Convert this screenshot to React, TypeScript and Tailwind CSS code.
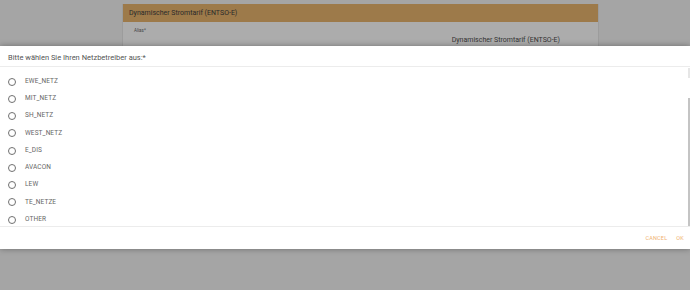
import React from 'react';

const options = ['EWE_NETZ', 'MIT_NETZ', 'SH_NETZ', 'WEST_NETZ', 'E_DIS', 'AVACON', 'LEW', 'TE_NETZE', 'OTHER'];

const Radio: React.FC<{ label: string }> = ({ label }) => (
  <div className="flex items-center h-[17.25px] pl-[8px]">
    <span className="w-[8px] h-[8px] rounded-full border border-[#707070] box-border" />
    <span className="ml-[9px] text-[6.5px] text-[#666] tracking-[0.1px]">{label}</span>
  </div>
);

const App: React.FC = () => (
  <div
    className="relative w-[690px] h-[290px] overflow-hidden bg-[#a5a5a5]"
    style={{ fontFamily: 'Roboto, "Liberation Sans", sans-serif' }}>
    {/* settings card behind the dialog */}
    <div className="ml-[122px] mt-[4px] w-[477px] h-[60px] bg-[#acacac] border-x border-[#9c9c9c]">
      <div className="h-[18px] bg-[#9d7a4a] flex items-center pl-[6px] text-[7px] text-[#2a2a2a]">
        Dynamischer Stromtarif (ENTSO-E)
      </div>
      <div className="pl-[11px] pt-[6px] text-[4.5px] text-[#444]">Alias*</div>
      <div className="pr-[38px] pt-0 text-right text-[7px] text-[#333]">
        Dynamischer Stromtarif (ENTSO-E)
      </div>
    </div>

    {/* dialog */}
    <div className="absolute left-0 top-[46px] w-[690px] h-[203px] bg-white shadow-[0_0_6px_rgba(0,0,0,0.35)] flex flex-col">
      <div className="h-[21px] flex items-center pt-[3px] pl-[8px] text-[7.5px] text-[#555] border-b border-[#ececec]">
        Bitte wählen Sie Ihren Netzbetreiber aus:*
      </div>
      <div className="relative h-[160px] border-b border-[#ececec] pt-[6px]">
        {options.map((o) => (
          <Radio key={o} label={o} />
        ))}
        <div className="absolute right-0 top-[1px] w-[2px] h-[10px] bg-[#e6e6e6]" />
        <div className="absolute right-0 top-[31px] w-[2px] h-[128px] bg-[#c4c4c4]" />
      </div>
      <div className="flex-1 flex items-center justify-end gap-[9px] pr-[6px] text-[5.5px] text-[#f0b270] tracking-[0.2px]">
        <span>CANCEL</span>
        <span>OK</span>
      </div>
    </div>
  </div>
);

export default App;
